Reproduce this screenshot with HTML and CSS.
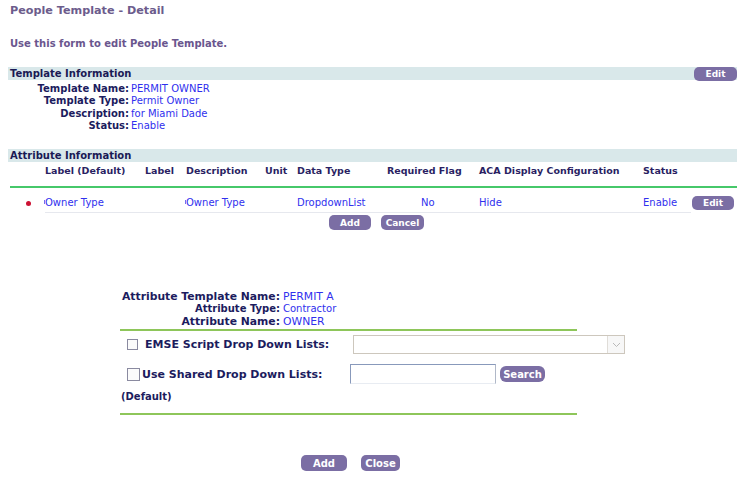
FILE: index.html
```html
<!DOCTYPE html>
<html>
<head>
<meta charset="utf-8">
<link rel="stylesheet" href="styles.css">
</head>
<body>
<div class="page">
  <div class="title">People Template - Detail</div>
  <div class="intro">Use this form to edit People Template.</div>

  <div class="bar">
    <span class="bar-title">Template Information</span>
    <span class="btn btn-bar">Edit</span>
  </div>
  <div class="info">
    <div class="info-label">Template Name:</div><div class="info-value">PERMIT OWNER</div>
    <div class="info-label">Template Type:</div><div class="info-value">Permit Owner</div>
    <div class="info-label">Description:</div><div class="info-value">for Miami Dade</div>
    <div class="info-label">Status:</div><div class="info-value">Enable</div>
  </div>

  <div class="bar bar-attr">
    <span class="bar-title">Attribute Information</span>
  </div>
  <div class="grid head">
    <div></div>
    <div>Label (Default)</div>
    <div>Label</div>
    <div>Description</div>
    <div>Unit</div>
    <div>Data Type</div>
    <div>Required Flag</div>
    <div>ACA Display Configuration</div>
    <div>Status</div>
    <div></div>
  </div>
  <div class="grid row">
    <div class="dot-cell"><span class="dot"></span></div>
    <div class="tick">Owner Type</div>
    <div></div>
    <div class="tick">Owner Type</div>
    <div></div>
    <div>DropdownList</div>
    <div class="req">No</div>
    <div>Hide</div>
    <div>Enable</div>
    <div><span class="btn btn-row">Edit</span></div>
  </div>
  <div class="actions">
    <span class="btn btn-add">Add</span>
    <span class="btn btn-cancel">Cancel</span>
  </div>

  <div class="form">
    <div class="attr-info">
      <div class="attr-label">Attribute Template Name:</div><div class="attr-value">PERMIT A</div>
      <div class="attr-label small">Attribute Type:</div><div class="attr-value small">Contractor</div>
      <div class="attr-label">Attribute Name:</div><div class="attr-value">OWNER</div>
    </div>
    <div class="green-line"></div>
    <div class="opt opt-emse">
      <span class="cb"></span>
      <span class="opt-label">EMSE Script Drop Down Lists:</span>
      <span class="select"><span class="select-arrow"><svg width="9" height="6" viewBox="0 0 9 6"><path d="M1 1 L4.5 4.5 L8 1" fill="none" stroke="#b9b9b9" stroke-width="1"/></svg></span></span>
    </div>
    <div class="opt opt-shared">
      <span class="cb"></span>
      <span class="opt-label">Use Shared Drop Down Lists:</span>
      <span class="textbox"></span>
      <span class="btn btn-search">Search</span>
    </div>
    <div class="default">(Default)</div>
    <div class="green-line"></div>
    <div class="form-actions">
      <span class="btn btn-add2">Add</span>
      <span class="btn btn-close">Close</span>
    </div>
  </div>
</div>
</body>
</html>
```
FILE: styles.css
```css
html, body { margin: 0; padding: 0; background: #ffffff; }
body { font-family: "DejaVu Sans", Verdana, sans-serif; font-size: 10px; color: #1c1c5e; }
.page { width: 743px; padding: 4px 6px 0 8px; box-sizing: border-box; }

.title { font-weight: bold; font-size: 11.2px; color: #6c5c8c; padding-left: 2px; line-height: 14px; }
.intro { font-weight: bold; font-size: 10px; color: #6a568e; padding-left: 2px; line-height: 14px; margin-top: 19px; }

.bar { margin-top: 16px; height: 13px; background: #d9e8ea; display: flex; align-items: center; justify-content: space-between; position: relative; }
.bar-title { font-weight: bold; font-size: 10px; color: #1a1a55; padding-left: 2px; }
.bar-attr { margin-top: 17px; }

.btn { display: inline-flex; align-items: center; justify-content: center; background: #7b6ea4; color: #ffffff; font-weight: bold; font-size: 9px; border-radius: 5px; box-sizing: border-box; }
.btn-bar { width: 43px; height: 14px; margin-top: 1px; }

.info { display: grid; grid-template-columns: 121px auto; column-gap: 2px; margin-top: 3px; line-height: 12.3px; }
.info-label { text-align: right; font-weight: bold; color: #1c1c5e; }
.info-value { color: #3030ee; }

.grid { display: grid; grid-template-columns: 37px 100px 41px 79px 32px 90px 92px 164px 48px 46px; }
.head { grid-template-columns: 35px 100px 41px 79px 32px 90px 92px 164px 48px 46px; height: 21px; padding-top: 3px; align-items: start; font-weight: bold; font-size: 9.5px; line-height: 12px; color: #2a1f63; border-bottom: 2px solid #46c86a; margin-left: 2px; }
.row { height: 25px; box-sizing: border-box; padding-top: 9px; align-items: start; line-height: 12px; color: #3030ee; position: relative; }
.row::after { content: ""; position: absolute; left: 37px; right: 46px; bottom: 0; border-bottom: 1px solid #e6e8ee; }
.req { padding-left: 34px; }
.dot-cell { display: flex; justify-content: center; padding-left: 3px; padding-top: 4px; }
.dot { width: 5px; height: 5px; border-radius: 50%; background: #cc1133; }
.tick { position: relative; }
.tick::before { content: ""; position: absolute; left: -1px; top: 3px; width: 1px; height: 4px; background: #7070ee; }
.btn-row { width: 42px; height: 14px; margin-top: -3px; margin-left: 1px; }

.actions { display: flex; gap: 10px; margin-top: 2px; margin-left: 321px; }
.btn-add { width: 42px; height: 15px; }
.btn-cancel { width: 43px; height: 15px; }

.form { margin-left: 112px; margin-top: 60px; width: 520px; }
.attr-info { display: grid; grid-template-columns: 160px auto; column-gap: 3px; font-size: 10.8px; line-height: 13px; }
.attr-label { text-align: right; font-weight: bold; color: #1c1c5e; white-space: nowrap; }
.attr-value { color: #3030ee; white-space: nowrap; }
.attr-label.small, .attr-value.small { font-size: 10px; line-height: 12px; }
.green-line { width: 457px; height: 2px; background: #8ec65a; margin-top: 1px; }

.opt { display: flex; align-items: center; font-weight: bold; font-size: 11px; color: #1c1c5e; }
.opt-emse { margin-top: 4px; height: 19px; }
.opt-emse .cb { margin-left: 7px; }
.opt-emse .opt-label { margin-left: 7px; width: 208px; }
.cb { width: 11px; height: 11px; border: 1px solid #8a8aa0; background: #fbfbfb; box-sizing: border-box; }
.select { width: 272px; height: 19px; border: 1px solid #cdc7bd; box-sizing: border-box; display: flex; justify-content: flex-end; }
.select-arrow { width: 16px; border-left: 1px solid #e0ddd8; display: flex; align-items: center; justify-content: center; background: #f7f7f7; }
.opt-shared { margin-top: 10px; height: 20px; }
.opt-shared .cb { margin-left: 7px; width: 13px; height: 13px; }
.opt-shared .opt-label { margin-left: 2px; width: 208px; }
.textbox { width: 146px; height: 20px; border: 1px solid #8899bb; border-bottom-color: #e8ecf2; border-right-color: #b0b8c8; box-sizing: border-box; }
.btn-search { width: 45px; height: 16px; margin-left: 4px; font-size: 10px; border-radius: 6px; }
.default { font-weight: bold; font-size: 10px; margin-top: 6px; line-height: 14px; margin-left: 1px; }
.default + .green-line { margin-top: 9px; }

.form-actions { display: flex; gap: 14px; margin-top: 40px; margin-left: 181px; }
.btn-add2 { width: 46px; height: 16px; font-size: 10px; }
.btn-close { width: 39px; height: 16px; font-size: 10px; }
```
